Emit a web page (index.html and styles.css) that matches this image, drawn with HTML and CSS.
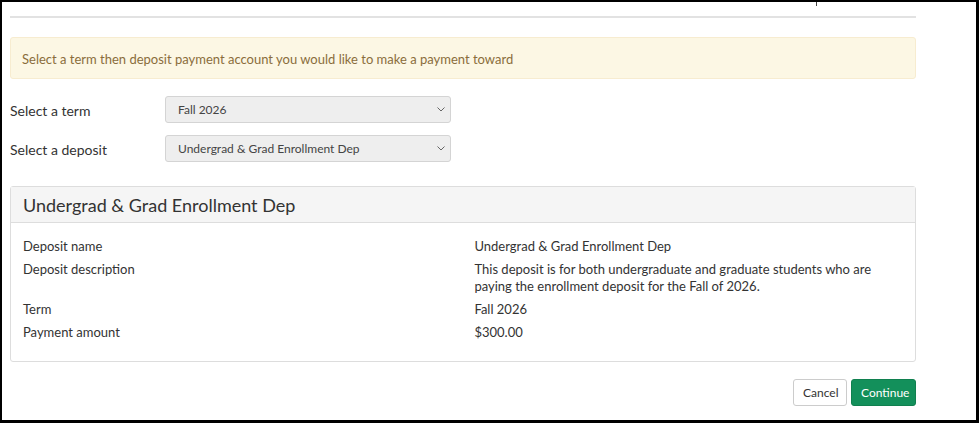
FILE: index.html
```html
<!DOCTYPE html>
<html>
<head>
<meta charset="utf-8">
<link rel="stylesheet" href="styles.css">
</head>
<body>
<div class="frame">
  <div class="page">
    <div class="top">
      <span class="tick"></span>
    </div>
    <hr class="rule">
    <div class="alert">Select a term then deposit payment account you would like to make a payment toward</div>
    <div class="form">
      <div class="field">
        <label class="label">Select a term</label>
        <div class="select"><span>Fall 2026</span><svg class="chev" width="8" height="5" viewBox="0 0 8 5"><path d="M0.5 0.5 L4 4 L7.5 0.5" fill="none" stroke="#666" stroke-width="1"/></svg></div>
      </div>
      <div class="field">
        <label class="label">Select a deposit</label>
        <div class="select"><span>Undergrad &amp; Grad Enrollment Dep</span><svg class="chev" width="8" height="5" viewBox="0 0 8 5"><path d="M0.5 0.5 L4 4 L7.5 0.5" fill="none" stroke="#666" stroke-width="1"/></svg></div>
      </div>
    </div>
    <div class="panel">
      <div class="panel-head">Undergrad &amp; Grad Enrollment Dep</div>
      <div class="panel-body">
        <div class="row"><div class="k">Deposit name</div><div class="v">Undergrad &amp; Grad Enrollment Dep</div></div>
        <div class="row"><div class="k">Deposit description</div><div class="v">This deposit is for both undergraduate and graduate students who are paying the enrollment deposit for the Fall of 2026.</div></div>
        <div class="row"><div class="k">Term</div><div class="v">Fall 2026</div></div>
        <div class="row"><div class="k">Payment amount</div><div class="v">$300.00</div></div>
      </div>
    </div>
    <div class="actions">
      <button class="btn btn-default">Cancel</button>
      <button class="btn btn-primary">Continue</button>
    </div>
  </div>
</div>
</body>
</html>
```

FILE: styles.css
```css
* { box-sizing: border-box; }
html, body { margin: 0; padding: 0; background: #fff; }
body { font-family: "Lato", "Open Sans", sans-serif; color: #333; font-size: 13px; }
.frame {
  width: 979px; height: 423px;
  border-style: solid; border-color: #000;
  border-width: 2px 3px 3px 2px;
  overflow: hidden;
}
.page { width: 914px; padding-left: 8px; }
.top { height: 14px; position: relative; }
.tick { position: absolute; left: 806px; top: 0; width: 1px; height: 4px; background: #444; }
.rule { margin: 0; border: 0; border-top: 2px solid #e2e2e2; }
.alert {
  margin-top: 19px;
  height: 42px;
  background: #fcf7e4;
  border: 1px solid #f7ecd0;
  border-radius: 3px;
  color: #8a6d3b;
  padding: 1px 11px 0;
  display: flex; align-items: center;
  font-size: 13px;
}
.form { margin-top: 17px; display: flex; flex-direction: column; gap: 12px; }
.field { display: flex; align-items: center; }
.label { width: 155px; font-size: 14px; color: #333; padding-top: 1px; }
.select {
  width: 286px; height: 27px;
  background: #eee; border: 1px solid #d4d4d4; border-radius: 3px;
  display: flex; align-items: center; justify-content: space-between;
  padding: 0 5px 0 12px; font-size: 12px; color: #444;
}
.chev { display: block; }
.panel {
  margin-top: 24px;
  border: 1px solid #ddd; border-radius: 3px;
  height: 176px;
}
.panel-head {
  background: #f5f5f5; border-bottom: 1px solid #ddd;
  height: 36px; padding: 0 12px;
  display: flex; align-items: center;
  font-size: 18px; color: #333;
}
.panel-body { padding: 15px 12px 0; display: flex; flex-direction: column; gap: 6px; }
.row { display: flex; line-height: 17px; font-size: 13px; }
.k { width: 453px; }
.v { width: 430px; }
.actions { margin-top: 17px; display: flex; justify-content: flex-end; gap: 4px; }
.btn {
  height: 27px; border-radius: 3px; font-family: inherit; font-size: 12px; padding: 0 9px;
}
.btn-default { background: #fff; border: 1px solid #ccc; color: #333; width: 54px; }
.btn-primary { background: #13905b; border: 1px solid #10804f; color: #fff; width: 65px; }
```
